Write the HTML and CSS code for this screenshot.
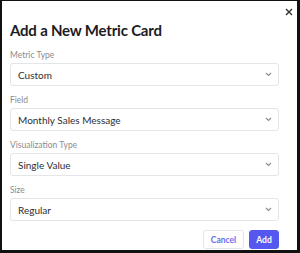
FILE: index.html
```html
<html>
    <head>
        <meta charset="utf-8">
        <title>Add a New Metric Card</title>
        <link rel="stylesheet" href="styles.css">
    </head>
    <body>
        <div class="frame">
            <div class="dialog">
                <button class="close" aria-label="Close">
                    <svg width="8" height="8" viewBox="0 0 8 8"><path d="M1 1L7 7M7 1L1 7" stroke="#333" stroke-width="1.4" fill="none"/></svg>
                </button>
                <h1 class="dialog-title">Add a New Metric Card</h1>
                <div class="field">
                    <label>Metric Type</label>
                    <div class="select"><span>Custom</span><svg class="chevron" width="7" height="5" viewBox="0 0 7 5"><path d="M1 1L3.5 3.5L6 1" stroke="#8a8f98" stroke-width="1.2" fill="none"/></svg></div>
                </div>
                <div class="field">
                    <label>Field</label>
                    <div class="select"><span>Monthly Sales Message</span><svg class="chevron" width="7" height="5" viewBox="0 0 7 5"><path d="M1 1L3.5 3.5L6 1" stroke="#8a8f98" stroke-width="1.2" fill="none"/></svg></div>
                </div>
                <div class="field">
                    <label>Visualization Type</label>
                    <div class="select"><span>Single Value</span><svg class="chevron" width="7" height="5" viewBox="0 0 7 5"><path d="M1 1L3.5 3.5L6 1" stroke="#8a8f98" stroke-width="1.2" fill="none"/></svg></div>
                </div>
                <div class="field">
                    <label>Size</label>
                    <div class="select"><span>Regular</span><svg class="chevron" width="7" height="5" viewBox="0 0 7 5"><path d="M1 1L3.5 3.5L6 1" stroke="#8a8f98" stroke-width="1.2" fill="none"/></svg></div>
                </div>
                <div class="actions">
                    <button class="btn btn-cancel">Cancel</button>
                    <button class="btn btn-add">Add</button>
                </div>
            </div>
        </div>
    </body>
</html>
```

FILE: styles.css
```css
body {
    margin: 0;
    font-family: Lato, "Noto Sans", sans-serif;
    background: #fff;
}
.frame {
    box-sizing: border-box;
    width: 300px;
    height: 253px;
    border-style: solid;
    border-color: #111;
    border-width: 1px 3px 3px 2px;
}
.dialog {
    position: relative;
    padding: 19px 18px 0 8px;
}
.close {
    position: absolute;
    top: 5px;
    right: 2px;
    width: 12px;
    height: 12px;
    padding: 0;
    border: 0;
    background: none;
    display: flex;
    align-items: center;
    justify-content: center;
}
.dialog-title {
    margin: 0 0 10px 0;
    font-size: 15px;
    line-height: 20px;
    font-weight: 700;
    color: #1c1c1f;
    letter-spacing: -0.2px;
}
.field {
    margin-bottom: 9px;
}
.field label {
    display: block;
    font-size: 8.5px;
    line-height: 11px;
    color: #8b8b8f;
    margin-bottom: 2px;
}
.select {
    box-sizing: border-box;
    height: 23px;
    border: 1px solid #e4e5e8;
    border-radius: 3px;
    display: flex;
    align-items: center;
    justify-content: space-between;
    padding: 0 6px 0 7px;
    font-size: 10px;
    color: #2e2e33;
}
.actions {
    display: flex;
    justify-content: flex-end;
    gap: 5px;
}
.btn {
    box-sizing: border-box;
    height: 19px;
    border-radius: 3px;
    font-family: Lato, "Noto Sans", sans-serif;
    font-size: 8.5px;
    font-weight: 700;
    padding: 0;
}
.btn-cancel {
    width: 41px;
    background: #fff;
    border: 1px solid #e4e5ea;
    color: #6a6cf0;
}
.btn-add {
    width: 30px;
    background: #5557ee;
    border: 1px solid #5557ee;
    color: #fff;
}
```
